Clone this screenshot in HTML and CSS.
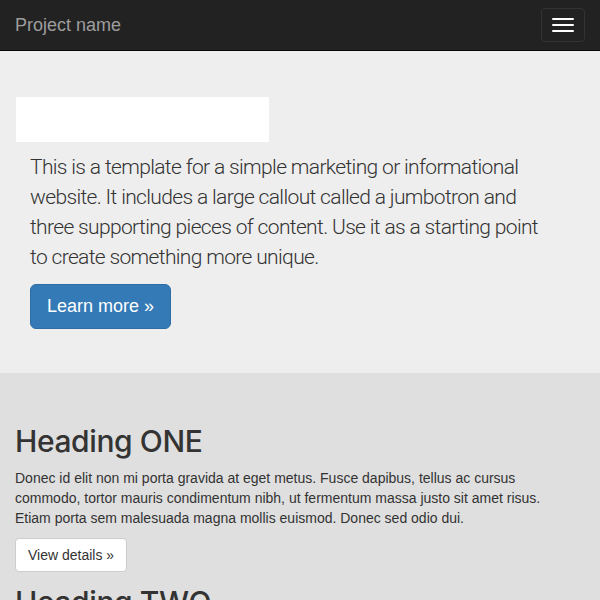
FILE: index.html
```html
<!DOCTYPE html>
<html>
<head>
<meta charset="utf-8">
<title>Jumbotron</title>
<link rel="stylesheet" href="styles.css">
</head>
<body>
<nav class="navbar">
  <a class="brand" href="#">Project name</a>
  <button class="toggle" type="button" aria-label="Toggle navigation">
    <span class="bar"></span><span class="bar"></span><span class="bar"></span>
  </button>
</nav>
<section class="jumbotron">
  <div class="title-box"></div>
  <p class="lead">This is a template for a simple marketing or informational website. It includes a large callout called a jumbotron and three supporting pieces of content. Use it as a starting point to create something more unique.</p>
  <p class="cta"><a class="btn-primary" href="#">Learn more &raquo;</a></p>
</section>
<main class="content">
  <h2 class="heading">Heading ONE</h2>
  <p class="text">Donec id elit non mi porta gravida at eget metus. Fusce dapibus, tellus ac cursus commodo, tortor mauris condimentum nibh, ut fermentum massa justo sit amet risus. Etiam porta sem malesuada magna mollis euismod. Donec sed odio dui.</p>
  <p class="more"><a class="btn-default" href="#">View details &raquo;</a></p>
  <h2 class="heading">Heading TWO</h2>
  <p class="text">Donec id elit non mi porta gravida at eget metus. Fusce dapibus, tellus ac cursus commodo, tortor mauris condimentum nibh, ut fermentum massa justo sit amet risus.</p>
</main>
</body>
</html>
```
FILE: styles.css
```css
html, body {
  margin: 0;
  padding: 0;
}
body {
  font-family: "Liberation Sans", Arial, sans-serif;
  font-size: 14px;
  line-height: 20px;
  color: #333;
  background: #dfdfdf;
}
.navbar {
  height: 50px;
  background: #222;
  border-bottom: 1px solid #080808;
  display: flex;
  align-items: center;
  justify-content: space-between;
  padding: 0 15px;
}
.brand {
  color: #9d9d9d;
  font-size: 18px;
  line-height: 20px;
  text-decoration: none;
}
.toggle {
  width: 44px;
  height: 34px;
  background: transparent;
  border: 1px solid #333;
  border-radius: 4px;
  padding: 0 10px;
  display: flex;
  flex-direction: column;
  justify-content: center;
  gap: 4px;
  box-sizing: border-box;
}
.bar {
  display: block;
  width: 22px;
  height: 2px;
  background: #fff;
  border-radius: 1px;
}
.jumbotron {
  background: #eee;
  padding: 46px 15px 44px 16px;
}
.title-box {
  width: 253px;
  height: 45px;
  background: #fff;
  margin-bottom: 10px;
}
.lead {
  margin: 0 0 12px 14px;
  width: 520px;
  font-family: Roboto, "Liberation Sans", sans-serif;
  font-size: 21px;
  line-height: 30px;
  font-weight: 300;
  letter-spacing: -0.65px;
  color: #333;
}
.cta {
  margin: 0 0 0 14px;
}
.btn-primary {
  display: inline-block;
  box-sizing: border-box;
  height: 45px;
  padding: 10px 16px;
  font-size: 18px;
  line-height: 23px;
  color: #fff;
  background: #337ab7;
  border: 1px solid #2e6da4;
  border-radius: 6px;
  text-decoration: none;
}
.content {
  padding: 52px 25px 0 15px;
}
.heading {
  margin: 0 0 10px;
  font-family: Inter, "Liberation Sans", sans-serif;
  font-size: 30px;
  line-height: 33px;
  font-weight: 500;
  letter-spacing: -0.4px;
  color: #333;
}
.text {
  margin: 0 0 10px;
}
.more {
  margin: 0 0 14px;
}
.btn-default {
  display: inline-block;
  box-sizing: border-box;
  height: 34px;
  padding: 6px 12px;
  font-size: 14px;
  line-height: 20px;
  color: #333;
  background: #fff;
  border: 1px solid #ccc;
  border-radius: 4px;
  text-decoration: none;
}
```
